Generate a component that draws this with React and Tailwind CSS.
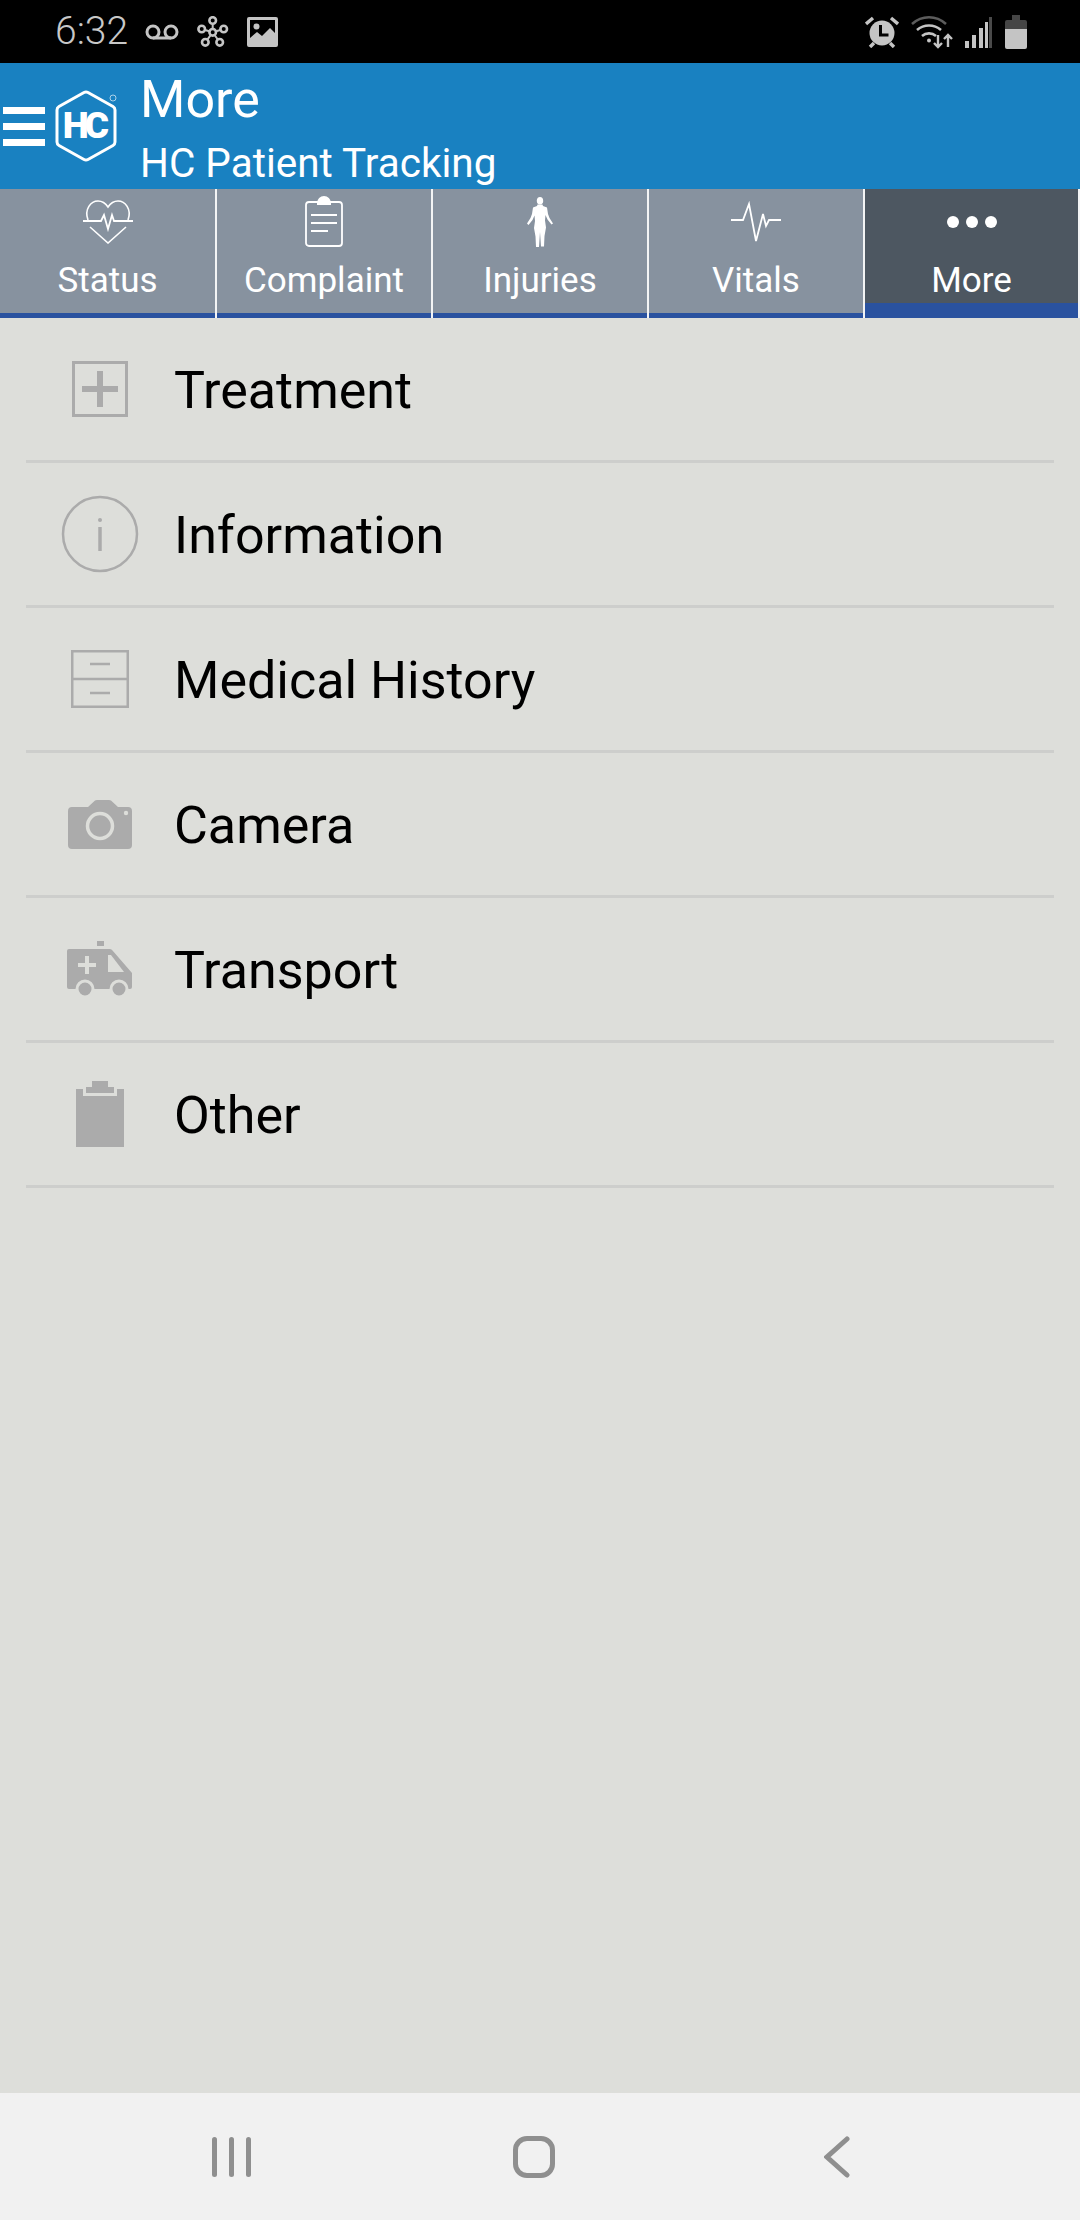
const Time = () => <span className="text-[39px] font-light leading-none text-[#c8c8c8]">6:32</span>;

const VoicemailIcon = () => (
  <svg width="34" height="16" viewBox="0 0 34 16" fill="none" stroke="#c4c4c4" strokeWidth="3">
    <circle cx="8" cy="8" r="6" />
    <circle cx="26" cy="8" r="6" />
    <path d="M8 14h18" />
  </svg>
);

const FlowerIcon = () => (
  <svg width="32" height="32" viewBox="0 0 32 32" fill="none" stroke="#c4c4c4" strokeWidth="2.600">
    <path d="M15.700 16.300 15.700 4.500M15.700 16.300 4.700 13M15.700 16.300 26.700 13M15.700 16.300 8.300 26.300M15.700 16.300 22.700 26.300" strokeWidth="2" />
    <circle cx="15.700" cy="4.500" r="3.300" fill="#000" />
    <circle cx="4.700" cy="13" r="3.300" fill="#000" />
    <circle cx="26.700" cy="13" r="3.300" fill="#000" />
    <circle cx="8.300" cy="26.300" r="3.300" fill="#000" />
    <circle cx="22.700" cy="26.300" r="3.300" fill="#000" />
    <circle cx="15.700" cy="16.300" r="3.300" fill="#000" />
  </svg>
);

const ImageIcon = () => (
  <svg width="31" height="30" viewBox="0 0 31 30">
    <path fillRule="evenodd" fill="#c4c4c4" d="M2 0h27a2 2 0 0 1 2 2v26a2 2 0 0 1-2 2H2a2 2 0 0 1-2-2V2a2 2 0 0 1 2-2zm1 3v18l7-6 5 4 8-8 5 5V3z" />
    <circle cx="9.500" cy="9.500" r="3" fill="#c4c4c4" />
  </svg>
);

const AlarmIcon = () => (
  <svg width="34" height="33" viewBox="0 0 34 33">
    <circle cx="17" cy="18" r="12.500" fill="#c4c4c4" />
    <path d="M1 9l7-6M33 9l-7-6M5 32l4-4M29 32l-4-4" stroke="#c4c4c4" strokeWidth="3.400" fill="none" />
    <path d="M15.500 10v10h8" stroke="#000" strokeWidth="3" fill="none" />
  </svg>
);

const WifiIcon = () => (
  <svg width="42" height="34" viewBox="0 0 42 34" fill="none" stroke="#c4c4c4" strokeWidth="2.600">
    <path d="M1 9C11 0 25 0 35 9" stroke="#5c5c5c" />
    <path d="M6 15c7-6 17-6 24 0" />
    <path d="M11 21c4-3.500 10-3.500 14 0" />
    <circle cx="18" cy="25.500" r="2" fill="#c4c4c4" stroke="none" />
    <path d="M27 20v12M23 28l4 4 4-4M37 32V20M33 24l4-4 4 4" strokeWidth="2.400" />
  </svg>
);

const SignalIcon = () => (
  <svg width="28" height="32" viewBox="0 0 28 32">
    <rect x="0" y="25" width="4" height="7" fill="#c4c4c4" />
    <rect x="7" y="19" width="4" height="13" fill="#c4c4c4" />
    <rect x="14" y="12" width="4" height="20" fill="#c4c4c4" />
    <rect x="24" y="1" width="3" height="31" fill="#4a4a4a" />
    <rect x="20" y="6" width="3" height="26" fill="#c4c4c4" />
  </svg>
);

const BatteryIcon = () => (
  <svg width="22" height="34" viewBox="0 0 22 34">
    <path d="M7 0h8v5h5a2 2 0 0 1 2 2v12H0V7a2 2 0 0 1 2-2h5z" fill="#454545" />
    <path d="M0 14h22v18a2 2 0 0 1-2 2H2a2 2 0 0 1-2-2z" fill="#c4c4c4" />
  </svg>
);

const HcLogo = () => (
  <svg width="66" height="72" viewBox="0 0 66 72">
    <path d="M31 2.500a4 4 0 0 1 4 0L60 16.500a4 4 0 0 1 2 3.500v32a4 4 0 0 1-2 3.500L35 69.500a4 4 0 0 1-4 0L6 55.500a4 4 0 0 1-2-3.500V20a4 4 0 0 1 2-3.500z" fill="none" stroke="#fff" strokeWidth="3" />
    <text x="31" y="48" textAnchor="middle" fill="#fff" fontFamily="Roboto, sans-serif" fontSize="37" fontWeight="900" letterSpacing="-4">HC</text>
    <circle cx="60" cy="8" r="3" fill="none" stroke="#fff" strokeWidth="0.900" opacity="0.700" />
  </svg>
);

const HeartIcon = () => (
  <svg width="50" height="44" viewBox="0 0 50 44" fill="none" stroke="#fff" strokeWidth="1.600">
    <path d="M5 20C1 9 8 1 15 1c5 0 8 3 10 6 2-3 5-6 10-6 7 0 14 8 10 19" />
    <path d="M0 21h18l3-6 4 14 4-14 2 6h19" strokeWidth="1.800" />
    <path d="M7 27l18 16 18-16" />
  </svg>
);

const ClipboardIcon = () => (
  <svg width="38" height="52" viewBox="0 0 38 52" fill="none" stroke="#fff" strokeWidth="1.800">
    <rect x="1" y="6" width="36" height="44" rx="3" />
    <path d="M13 7a6 6 0 0 1 12 0z" fill="#fff" />
    <rect x="12" y="6" width="14" height="3" fill="#fff" stroke="none" />
    <path d="M6 19h26M6 27h26M6 35h17" />
  </svg>
);

const BodyIcon = () => (
  <svg width="26" height="50" viewBox="0 0 26 50" fill="#fff">
    <ellipse cx="13" cy="3.800" rx="3.200" ry="3.800" />
    <path d="M10.500 7.500h5l.5 1.500 4 1.500 1 6.500 1.500 4 3.500 5.500-1.500 1-4-5-2-4.500-.5 5.500 1 7-1.500 8.500-.5 10.500h-3L13 35l-1 15H9l-.5-10.500L7 31l1-7-.5-5.500-2 4.500-4 5L0 26.500 3.500 21 5 17l1-6.500 4-1.500z" />
  </svg>
);

const PulseIcon = () => (
  <svg width="50" height="42" viewBox="0 0 50 42" fill="none" stroke="#fff" strokeWidth="1.800">
    <path d="M0 19h12l6-16 7 37 7-27 3 12 3-6h12" />
  </svg>
);

const DotsIcon = () => (
  <div className="flex h-[52px] items-center justify-center gap-[7px]">
    <span className="h-[12px] w-[12px] rounded-full bg-white" />
    <span className="h-[12px] w-[12px] rounded-full bg-white" />
    <span className="h-[12px] w-[12px] rounded-full bg-white" />
  </div>
);

const PlusBoxIcon = () => (
  <svg width="56" height="56" viewBox="0 0 56 56" fill="none" stroke="#ababab">
    <rect x="1.500" y="1.500" width="53" height="53" strokeWidth="3" />
    <path d="M28 10v36M10 28h36" strokeWidth="6" />
  </svg>
);

const InfoIcon = () => (
  <svg width="78" height="78" viewBox="0 0 78 78" fill="none" stroke="#ababab" strokeWidth="2.500">
    <circle cx="39" cy="39" r="37" />
    <path d="M39 32v24" strokeWidth="3.500" />
    <circle cx="39" cy="25" r="2" fill="#ababab" stroke="none" />
  </svg>
);

const DrawerIcon = () => (
  <svg width="58" height="58" viewBox="0 0 58 58" fill="none" stroke="#ababab" strokeWidth="2.500">
    <rect x="1.250" y="1.250" width="55.500" height="55.500" />
    <path d="M1 29h56" />
    <path d="M19 14h20M19 43h20" />
  </svg>
);

const CameraIcon = () => (
  <svg width="64" height="50" viewBox="0 0 64 50">
    <path d="M4 8h16L27 1.500a4 4 0 0 1 2-.500h12a4 4 0 0 1 2 .500L50 8h10a4 4 0 0 1 4 4v34a4 4 0 0 1-4 4H4a4 4 0 0 1-4-4V12a4 4 0 0 1 4-4z" fill="#ababab" />
    <circle cx="32" cy="27" r="12.500" fill="none" stroke="#dddeda" strokeWidth="3.500" />
    <circle cx="58" cy="14" r="2.200" fill="#dddeda" />
  </svg>
);

const AmbulanceIcon = () => (
  <svg width="66" height="56" viewBox="0 0 66 56">
    <rect x="30" y="0" width="7" height="5" fill="#ababab" />
    <path d="M2 8h41a3 3 0 0 1 2.500 1.500L65 32v14a2 2 0 0 1-2 2H2a2 2 0 0 1-2-2V10a2 2 0 0 1 2-2z" fill="#ababab" />
    <path d="M41 14h3l13 17H41z" fill="#dddeda" />
    <path d="M20 15v18M11 24h18" stroke="#dddeda" strokeWidth="4" />
    <circle cx="18" cy="48" r="8" fill="#ababab" stroke="#dddeda" strokeWidth="3" />
    <circle cx="52" cy="48" r="8" fill="#ababab" stroke="#dddeda" strokeWidth="3" />
  </svg>
);

const SolidClipboardIcon = () => (
  <svg width="48" height="66" viewBox="0 0 48 66">
    <path d="M16 0h16v6h6v6H10V6h6z" fill="#ababab" />
    <path d="M0 8h7v7h34V8h7v58H0z" fill="#ababab" />
  </svg>
);

const tabs = [
  { label: "Status", icon: <HeartIcon /> },
  { label: "Complaint", icon: <ClipboardIcon /> },
  { label: "Injuries", icon: <BodyIcon /> },
  { label: "Vitals", icon: <PulseIcon /> },
  { label: "More", icon: <DotsIcon />, active: true },
];

const rows = [
  { label: "Treatment", icon: <PlusBoxIcon /> },
  { label: "Information", icon: <InfoIcon /> },
  { label: "Medical History", icon: <DrawerIcon /> },
  { label: "Camera", icon: <CameraIcon /> },
  { label: "Transport", icon: <AmbulanceIcon /> },
  { label: "Other", icon: <SolidClipboardIcon /> },
];

const Tab = ({ label, icon, active }) => (
  <div className={`flex flex-col border-r-2 border-[#f3f4f5] ${active ? "bg-[#4d5761]" : "bg-[#87929f]"}`}>
    <div className="flex h-[60px] items-center justify-center pt-[6px]">{icon}</div>
    <div className="flex-1 pt-[12px] text-center text-[35px] leading-[40px] text-white">{label}</div>
    <div className={`bg-[#2a529f] ${active ? "h-[15px]" : "h-[5px]"}`} />
  </div>
);

export default function App() {
  return (
    <div className="flex h-[2220px] flex-col bg-[#dddeda] font-['Roboto',sans-serif]">
      <div className="flex h-[63px] items-center justify-between bg-black pl-[55px] pr-[53px]">
        <div className="flex items-center">
          <Time />
          <div className="ml-[17px] flex items-center gap-[18px]">
            <VoicemailIcon />
            <FlowerIcon />
            <ImageIcon />
          </div>
        </div>
        <div className="flex items-center gap-[12px]">
          <AlarmIcon />
          <WifiIcon />
          <SignalIcon />
          <BatteryIcon />
        </div>
      </div>

      <div className="flex h-[126px] items-center bg-[#1981c1] pl-[3px] text-white">
        <div className="flex w-[42px] flex-col gap-[9px]">
          <span className="h-[7px] bg-white" />
          <span className="h-[7px] bg-white" />
          <span className="h-[7px] bg-white" />
        </div>
        <div className="ml-[8px]">
          <HcLogo />
        </div>
        <div className="ml-[21px] flex flex-col pt-[10px]">
          <span className="text-[52px] leading-[60px]">More</span>
          <span className="pt-[3px] text-[40.5px] leading-[60px]">HC Patient Tracking</span>
        </div>
      </div>

      <div className="grid h-[129px] grid-cols-[217px_216px_216px_216px_215px]">
        {tabs.map((tab) => (
          <Tab key={tab.label} {...tab} />
        ))}
      </div>

      <div className="flex-1">
        {rows.map((row) => (
          <div key={row.label} className="mx-[26px] flex h-[145px] items-center border-b-[3px] border-[#cdcecc]">
            <div className="flex w-[148px] justify-center">{row.icon}</div>
            <span className="pt-[4px] text-[52px] text-black">{row.label}</span>
          </div>
        ))}
      </div>

      <div className="flex h-[127px] items-center justify-center bg-[#f1f1f1] pr-[12px]">
        <div className="flex w-[303px] justify-center gap-[12px]">
          <span className="h-[40px] w-[5px] rounded-full bg-[#8f8f8f]" />
          <span className="h-[40px] w-[5px] rounded-full bg-[#8f8f8f]" />
          <span className="h-[40px] w-[5px] rounded-full bg-[#8f8f8f]" />
        </div>
        <div className="flex w-[303px] justify-center">
          <div className="h-[42px] w-[42px] rounded-[14px] border-[5px] border-[#8f8f8f]" />
        </div>
        <div className="flex w-[303px] justify-center">
          <svg width="26" height="42" viewBox="0 0 26 42" fill="none" stroke="#8f8f8f" strokeWidth="5" strokeLinecap="round" strokeLinejoin="miter">
            <path d="M23 3 3 21l20 18" />
          </svg>
        </div>
      </div>
    </div>
  );
}
